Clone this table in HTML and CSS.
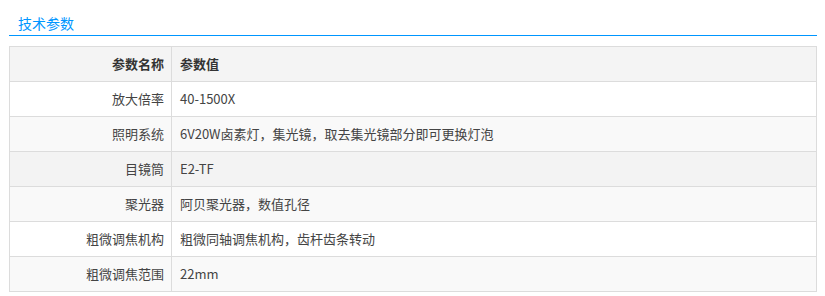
FILE: index.html
```html
<!DOCTYPE html>
<html lang="zh-CN">
<head>
<meta charset="utf-8">
<title>技术参数</title>
<link rel="stylesheet" href="styles.css">
</head>
<body>
<div class="section">
  <div class="title"><span>技术参数</span></div>
  <table class="params">
    <colgroup><col class="c1"><col class="c2"></colgroup>
    <thead>
      <tr><th class="name">参数名称</th><th class="val">参数值</th></tr>
    </thead>
    <tbody>
      <tr><td class="name">放大倍率</td><td class="val">40-1500X</td></tr>
      <tr class="alt"><td class="name">照明系统</td><td class="val">6V20W卤素灯，集光镜，取去集光镜部分即可更换灯泡</td></tr>
      <tr class="hover"><td class="name">目镜筒</td><td class="val">E2-TF</td></tr>
      <tr class="alt"><td class="name">聚光器</td><td class="val">阿贝聚光器，数值孔径</td></tr>
      <tr><td class="name">粗微调焦机构</td><td class="val">粗微同轴调焦机构，齿杆齿条转动</td></tr>
      <tr class="alt"><td class="name">粗微调焦范围</td><td class="val">22mm</td></tr>
    </tbody>
  </table>
</div>
</body>
</html>
```

FILE: styles.css
```css
html, body {
  margin: 0;
  padding: 0;
  background: #fff;
}
body {
  font-family: "Noto Sans CJK SC", "Noto Sans", sans-serif;
  color: #444;
}
.section {
  width: 808px;
  margin-left: 9px;
}
.title {
  padding: 13px 0 2px 9px;
  line-height: 20px;
  font-size: 14px;
  color: #0096ff;
  border-bottom: 1px solid #0096ff;
}
.params {
  margin-top: 10px;
  width: 808px;
  border-collapse: collapse;
  table-layout: fixed;
  border: 1px solid #dcdcdc;
  font-size: 13px;
}
.c1 { width: 162px; }
.params th, .params td {
  height: 34px;
  padding: 0 8px;
  border: 1px solid #dcdcdc;
  line-height: 20px;
  vertical-align: middle;
  white-space: nowrap;
}
.params th {
  background: #f4f4f4;
  font-weight: bold;
  color: #333;
}
.params .name { text-align: right; padding-right: 7px; }
.params .val { text-align: left; }
.params tbody tr { background: #fff; }
.params tbody tr.alt { background: #f9f9f9; }
.params tbody tr.hover { background: #f3f3f3; }
```
